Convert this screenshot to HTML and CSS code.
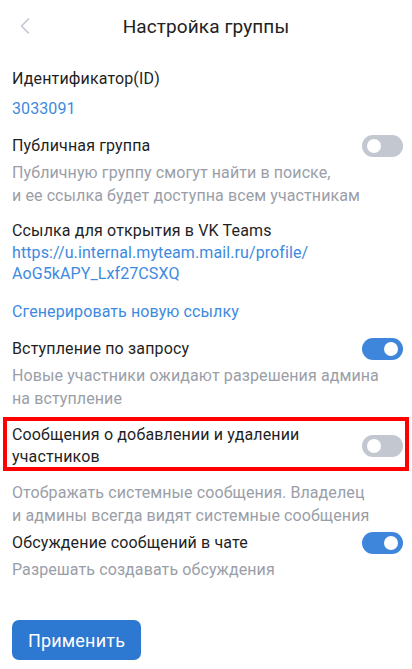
FILE: index.html
```html
<!DOCTYPE html>
<html lang="ru">
<head>
    <meta charset="UTF-8">
    <meta name="viewport" content="width=device-width, initial-scale=1.0">
    <title>Настройка группы</title>
    <link rel="stylesheet" href="styles.css">
</head>
<body>
    <div class="screen">
        <!-- Top bar -->
        <div class="top-bar">
            <span class="back">
                <svg width="10" height="16" viewBox="0 0 10 16"><path d="M8.5 1 L1.5 8 L8.5 15" fill="none" stroke="#c3c5d2" stroke-width="1.6" stroke-linecap="round" stroke-linejoin="round"/></svg>
            </span>
            <div class="title">Настройка группы</div>
        </div>

        <div class="content">
            <div class="block id-block">
                <div class="label">Идентификатор(ID)</div>
                <div class="link-text id-value">3033091</div>
            </div>

            <div class="block public-block">
                <div class="row">
                    <div class="label">Публичная группа</div>
                    <span class="toggle"></span>
                </div>
                <div class="hint">Публичную группу смогут найти в поиске,<br>и ее ссылка будет доступна всем участникам</div>
            </div>

            <div class="block link-block">
                <div class="label">Ссылка для открытия в VK Teams</div>
                <div class="link-text url">https://u.internal.myteam.mail.ru/profile/<br>AoG5kAPY_Lxf27CSXQ</div>
            </div>

            <div class="block regen-block">
                <div class="link-text">Сгенерировать новую ссылку</div>
            </div>

            <div class="block request-block">
                <div class="row">
                    <div class="label">Вступление по запросу</div>
                    <span class="toggle on"></span>
                </div>
                <div class="hint">Новые участники ожидают разрешения админа<br>на вступление</div>
            </div>

            <div class="block system-block">
                <div class="row highlighted">
                    <div class="label">Сообщения о добавлении и удалении<br>участников</div>
                    <span class="toggle"></span>
                </div>
                <div class="hint">Отображать системные сообщения. Владелец<br>и админы всегда видят системные сообщения</div>
            </div>

            <div class="block threads-block">
                <div class="row">
                    <div class="label">Обсуждение сообщений в чате</div>
                    <span class="toggle on"></span>
                </div>
                <div class="hint">Разрешать создавать обсуждения</div>
            </div>

            <button class="apply">Применить</button>
        </div>
    </div>
</body>
</html>
```

FILE: styles.css
```css
body {
    margin: 0;
    font-family: Roboto, 'Noto Sans', sans-serif;
    background-color: #fff;
    color: #1f1f1f;
}

.screen {
    width: 412px;
}

.top-bar {
    position: relative;
    height: 52px;
    display: flex;
    align-items: center;
    justify-content: center;
}

.back {
    position: absolute;
    left: 20px;
    top: 18px;
    display: flex;
}

.title {
    font-size: 19px;
    font-weight: 400;
    color: #222;
    letter-spacing: 0.1px;
}

.content {
    padding: 16px 9px 0 12px;
}

/* vertical rhythm taken from the screen */
.public-block { margin-top: 15px; }
.link-block { margin-top: 13px; }
.regen-block { margin-top: 17px; }
.request-block { margin-top: 15px; }
.system-block { margin-top: 14px; }
.threads-block { margin-top: 5px; }

.label {
    font-size: 16px;
    line-height: 22px;
    letter-spacing: 0.15px;
}

.row {
    display: flex;
    align-items: center;
    justify-content: space-between;
    gap: 20px;
}

.row.highlighted {
    position: relative;
}

.row.highlighted::after {
    content: '';
    position: absolute;
    top: -7px;
    bottom: -3px;
    left: -9px;
    right: -6px;
    border: 4px solid #ff0000;
}

.link-text {
    font-size: 16px;
    line-height: 22px;
    color: #3d8ae0;
    letter-spacing: 0.1px;
}

.id-value {
    margin-top: 8px;
}

.url {
    line-height: 21px;
}

.hint {
    margin-top: 4px;
    font-size: 16px;
    line-height: 23px;
    color: #9a9ea8;
    letter-spacing: 0.1px;
}

.system-block .hint {
    margin-top: 13px;
}

.toggle {
    flex-shrink: 0;
    position: relative;
    width: 41px;
    height: 22px;
    border-radius: 11px;
    background-color: #c3c7d0;
}

.toggle::after {
    content: '';
    position: absolute;
    top: 4px;
    left: 5px;
    width: 14px;
    height: 14px;
    border-radius: 50%;
    background-color: #fff;
}

.toggle.on {
    background-color: #3d86dc;
}

.toggle.on::after {
    left: auto;
    right: 5px;
}

.apply {
    margin-top: 39px;
    width: 129px;
    height: 40px;
    border: none;
    border-radius: 7px;
    background-color: #2d78d0;
    color: #fff;
    font-family: Roboto, 'Noto Sans', sans-serif;
    font-size: 18px;
    font-weight: 400;
    letter-spacing: 0.2px;
}
```
